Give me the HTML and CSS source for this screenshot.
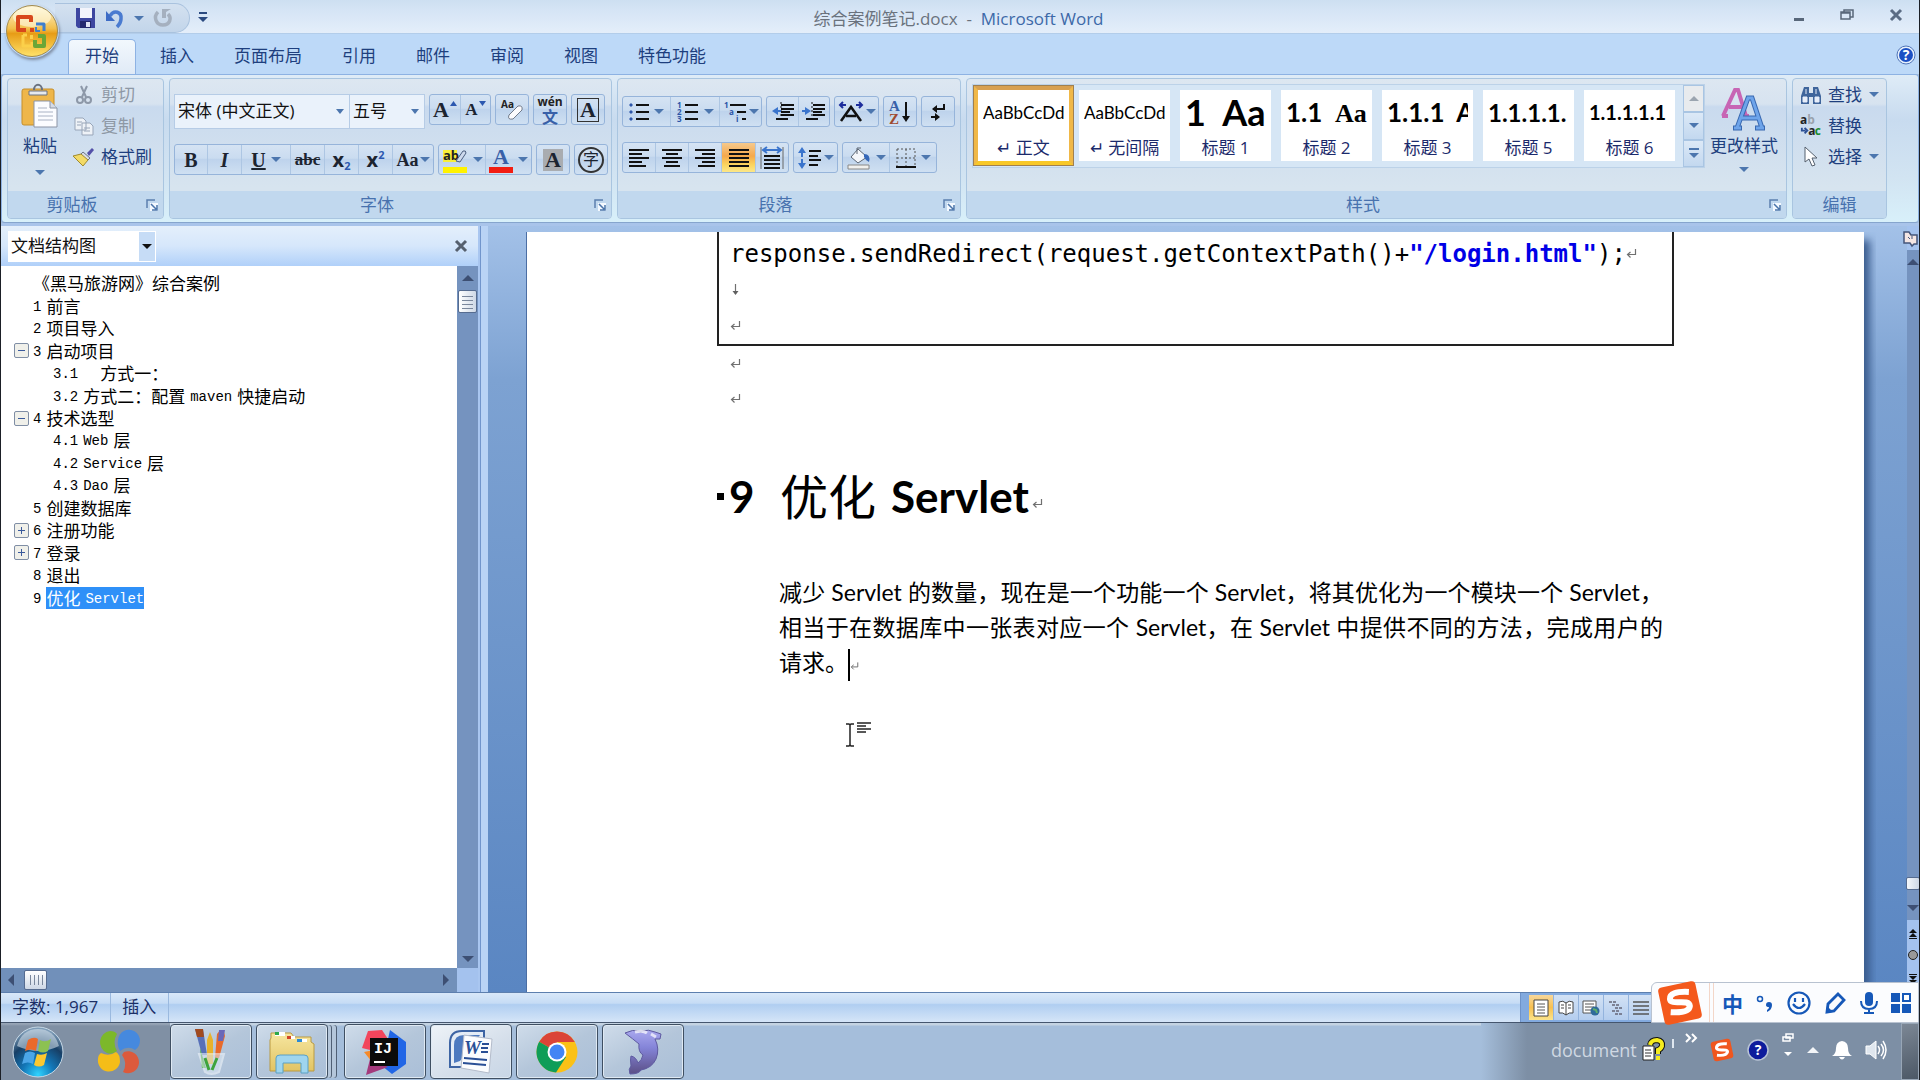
FILE: index.html
```html
<!DOCTYPE html>
<html lang="zh-CN">
<head>
<meta charset="utf-8">
<title>综合案例笔记.docx - Microsoft Word</title>
<link rel="stylesheet" href="styles.css">
</head>
<body>
<svg class="defs" aria-hidden="true">
  <defs>
    <symbol id="ret" viewBox="0 0 11 10"><path d="M9.500 0v5.500H2M4.500 3L1.500 5.500l3 3" fill="none" stroke="#707070" stroke-width="1.200"/></symbol>
    <symbol id="launch" viewBox="0 0 12 12"><path d="M1 9V1h8" fill="none" stroke="#5b7fae" stroke-width="1.500"/><path d="M4 4h8v8H4z" fill="#f4f9ff"/><path d="M5 5l5 5M11 6v5H6" fill="none" stroke="#4a74aa" stroke-width="1.500"/></symbol>
    <linearGradient id="gOrb" x1="0" y1="0" x2="0" y2="1"><stop offset="0" stop-color="#fff6d4"/><stop offset=".45" stop-color="#f3c04d"/><stop offset=".55" stop-color="#e79c16"/><stop offset="1" stop-color="#ffe36a"/></linearGradient>
    <radialGradient id="gWin" cx=".5" cy=".95" r=".9"><stop offset="0" stop-color="#2fd3ff"/><stop offset=".35" stop-color="#1377b8"/><stop offset=".7" stop-color="#173f66"/><stop offset="1" stop-color="#7f9db8"/></radialGradient>
    <linearGradient id="gDolphin" x1="0" y1="0" x2="0" y2="1"><stop offset="0" stop-color="#a9a8ee"/><stop offset=".4" stop-color="#8484d8"/><stop offset="1" stop-color="#5b4f86"/></linearGradient>
    <linearGradient id="gFolder" x1="0" y1="0" x2="0" y2="1"><stop offset="0" stop-color="#f6e6a0"/><stop offset="1" stop-color="#e2c463"/></linearGradient>
  </defs>
</svg>

<header class="titlebar">
  <div class="qat">
    <button class="plain" aria-label="保存"><svg width="22" height="22" viewBox="0 0 22 22"><path d="M2 1h19v20H4l-2-2z" fill="#3d46a0"/><path d="M6 1h12v10H6z" fill="#f2f4fb"/><path d="M6 14h11v7H6z" fill="#22286e"/><path d="M12 15h4v5h-4z" fill="#dfe3f4"/></svg></button>
    <button class="plain" aria-label="撤消"><svg width="20" height="20" viewBox="0 0 20 20"><path d="M5 8C9 1 17 4 16 11c0 3-2 6-4 8" fill="none" stroke="#4a7bd0" stroke-width="3.500"/><path d="M1 3v10h9z" fill="#3d6cc6"/></svg></button>
    <i class="caret"></i>
    <button class="plain redo" aria-label="恢复"><svg width="20" height="20" viewBox="0 0 20 20"><path d="M5 4c-5 5-2 13 5 13s9-7 5-11" fill="none" stroke="#a5b0bf" stroke-width="3.500"/><path d="M9 1h9l-5 3v6h-4z" fill="#a5b0bf"/></svg></button>
  </div>
  <button class="plain more" aria-label="自定义快速访问工具栏"><svg width="10" height="12" viewBox="0 0 10 12"><path d="M1 1h8v2H1zM0 6h10l-5 5z" fill="#2b4a80"/></svg></button>
  <h1 class="title">综合案例笔记.docx&nbsp; -&nbsp; <span>Microsoft Word</span></h1>
  <div class="wincontrols">
    <button class="plain" aria-label="最小化"><svg width="12" height="14" viewBox="0 0 12 14"><path d="M1 10h10v3H1z" fill="#58677a"/></svg></button>
    <button class="plain" aria-label="还原"><svg width="14" height="14" viewBox="0 0 14 14"><path d="M4 4V2h9v7h-3M1 4h9v7H1zM1 5h9" fill="none" stroke="#58677a" stroke-width="1.500"/></svg></button>
    <button class="plain" aria-label="关闭"><svg width="14" height="14" viewBox="0 0 14 14"><path d="M2 2l10 10M12 2L2 12" stroke="#5b6c84" stroke-width="3"/></svg></button>
  </div>
</header>

<nav class="tabs">
  <button class="tab active">开始</button><button class="tab">插入</button><button class="tab">页面布局</button><button class="tab">引用</button><button class="tab">邮件</button><button class="tab">审阅</button><button class="tab">视图</button><button class="tab">特色功能</button>
  <button class="plain help" aria-label="帮助"><svg width="20" height="20" viewBox="0 0 20 20"><circle cx="10" cy="10" r="9" fill="#e8f1fc" stroke="#4f74b8"/><circle cx="10" cy="10" r="7" fill="#1c50c4"/><text x="10" y="15" text-anchor="middle" class="qmark">?</text></svg></button>
</nav>
<button class="plain office" aria-label="Office 按钮"><svg width="54" height="54" viewBox="0 0 54 54"><circle cx="27" cy="27" r="25.500" fill="url(#gOrb)" stroke="#a08a50"/><ellipse cx="27" cy="13" rx="19" ry="10" fill="#fffbe6" opacity=".6"/><g fill="none" stroke-linejoin="round"><path d="M21 26h-8V13h13v5" stroke="#d8481c" stroke-width="4"/><path d="M31 20h8v7" stroke="#3f7fce" stroke-width="3"/><path d="M31 23v4h4" stroke="#3f7fce" stroke-width="2"/><path d="M18 31v11h9v-4M18 31h4" stroke="#fbd04a" stroke-width="3"/><path d="M33 32h6v10h-9v-6" stroke="#6aa637" stroke-width="4"/></g><path d="M25 24h4v4h-4z" fill="#d8481c"/><path d="M25 31h3v4h-3z" fill="#fbd04a"/></svg></button>

<section class="ribbon">
  <div class="group clip">
    <div class="gbody">
      <button class="plain big"><svg width="38" height="44" viewBox="0 0 38 44"><rect x="1" y="5" width="32" height="36" rx="2" fill="#eeb64a" stroke="#c58e2b"/><path d="M8 7h18v4H8z" fill="#e6e9ee" stroke="#6a7280"/><path d="M13 6c0-7 8-7 8 0" fill="none" stroke="#6a7280" stroke-width="2"/><path d="M13 17h16l7 7v19H13z" fill="#fbfcff" stroke="#8b94a5"/><path d="M29 17v7h7" fill="#d5dbe6" stroke="#8b94a5"/><path d="M17 24h9M17 28h15M17 32h15M17 36h15" stroke="#a9b2c4"/></svg><span>粘贴</span><i class="caret"></i></button>
      <div class="stack">
        <button class="plain item off"><svg width="20" height="20" viewBox="0 0 20 20"><path d="M7 1l5 11M13 1L8 12" stroke="#8d98a8" stroke-width="2"/><circle cx="6" cy="15" r="3" fill="none" stroke="#8d98a8" stroke-width="2"/><circle cx="14" cy="15" r="3" fill="none" stroke="#8d98a8" stroke-width="2"/></svg>剪切</button>
        <button class="plain item off"><svg width="20" height="20" viewBox="0 0 20 20"><g fill="#eef2f7" stroke="#98a5b8"><path d="M1 2h8l3 3v9H1zM8 7h8l3 3v9H8z"/><path d="M3 6h5M3 9h4M10 12h6M10 15h6"/></g></svg>复制</button>
        <button class="plain item"><svg width="22" height="20" viewBox="0 0 22 20"><path d="M14 6l5-5 2 2-5 6z" fill="#5350a8"/><path d="M10 5l7 6-3 3-7-6z" fill="#d8dce6" stroke="#6c7486"/><path d="M8 7l7 6-5 6L0 9z" fill="#f3da66" stroke="#a08a2e"/></svg>格式刷</button>
      </div>
    </div>
    <div class="gfoot"><span>剪贴板</span><svg width="12" height="12"><use href="#launch"/></svg></div>
  </div>

  <div class="group font">
    <div class="gbody rows">
      <div class="row">
        <label class="combo face"><select aria-label="字体"><option>宋体 (中文正文)</option></select></label>
        <label class="combo size"><select aria-label="字号"><option>五号</option></select></label>
        <div class="btns"><button class="w30 serif f22">A<svg width="7" height="5"><path d="M0 5h7L3.500 0z" fill="#2c58b0"/></svg></button><button class="w30 serif f17">A<svg width="7" height="5"><path d="M0 0h7L3.500 5z" fill="#2c58b0"/></svg></button></div>
        <div class="btns"><button class="w32" aria-label="清除格式"><svg width="26" height="26" viewBox="0 0 26 26"><text x="2" y="11" class="t10">Aa</text><path d="M10 18l9-9q5-1 4 4l-9 9q-6 1-4-4z" fill="#fbfbfd" stroke="#707a8a"/></svg></button></div>
        <div class="btns"><button class="w32 pinyin"><span class="wen">wén</span><span>文</span></button></div>
        <div class="btns"><button class="w32 serif"><span class="framed">A</span></button></div>
      </div>
      <div class="row">
        <div class="btns"><button class="w32 serif f20"><b>B</b></button><button class="w34 serif f20"><i>I</i></button><button class="w49 serif f20"><u>U</u><i class="caret"></i></button><button class="w34 serif f17"><s>abc</s></button><button class="w34 sans f20"><b>x</b><sub>2</sub></button><button class="w34 sans f20"><b>x</b><sup>2</sup></button><button class="w41 serif f18">Aa<i class="caret"></i></button></div>
        <div class="btns"><button class="w46" aria-label="突出显示"><svg width="26" height="26" viewBox="0 0 26 26"><path d="M1 3h14v12H1z" fill="#f8ef3a"/><text x="1" y="13" class="t13">ab</text><path d="M14 14l7-10q3-1 3 2l-6 9z" fill="#cdd9ec" stroke="#4c6080"/><path d="M1 20h24v6H1z" fill="#fff200"/></svg><i class="caret"></i></button><button class="w46" aria-label="字体颜色"><svg width="24" height="26" viewBox="0 0 24 26"><text x="12" y="17" text-anchor="middle" class="t21 blue">A</text><path d="M0 20h24v6H0z" fill="#f21d12"/></svg><i class="caret"></i></button></div>
        <div class="btns"><button class="w32 serif"><span class="shaded">A</span></button></div>
        <div class="btns"><button class="w32"><span class="ringed">字</span></button></div>
      </div>
    </div>
    <div class="gfoot"><span>字体</span><svg width="12" height="12"><use href="#launch"/></svg></div>
  </div>

  <div class="group para">
    <div class="gbody rows">
      <div class="row">
        <div class="btns"><button class="w47" aria-label="项目符号"><svg width="20" height="20" viewBox="0 0 20 20"><path d="M7 3h13M7 10h13M7 17h13" stroke="#111" stroke-width="2"/><path d="M2 1l2 2-2 2-2-2zM2 8l2 2-2 2-2-2zM2 15l2 2-2 2-2-2z" fill="#2c55a8"/></svg><i class="caret"></i></button><button class="w49" aria-label="编号"><svg width="22" height="22" viewBox="0 0 22 22"><path d="M8 4h13M8 11h13M8 18h13" stroke="#111" stroke-width="2"/><g class="t8"><text x="0" y="7">1</text><text x="0" y="14">2</text><text x="0" y="21">3</text></g></svg><i class="caret"></i></button><button class="w42" aria-label="多级列表"><svg width="24" height="22" viewBox="0 0 24 22"><path d="M7 4h16M14 11h9M19 18h4" stroke="#111" stroke-width="2"/><g class="t8"><text x="1" y="7">1</text><text x="6" y="14">a</text><text x="13" y="21">i</text></g></svg><i class="caret"></i></button></div>
        <div class="btns"><button class="w31" aria-label="减少缩进量"><svg width="24" height="22" viewBox="0 0 24 22"><path d="M10 4h13M10 8h13M10 11h9M10 14h13M5 18h12" stroke="#111" stroke-width="2"/><path d="M10 1v20" stroke="#111" stroke-dasharray="2 2"/><path d="M1 10l6-4v8z" fill="#3a74cc"/><path d="M5 10h5" stroke="#3a74cc" stroke-width="2"/></svg></button><button class="w31" aria-label="增加缩进量"><svg width="24" height="22" viewBox="0 0 24 22"><path d="M11 4h12M11 8h12M11 11h9M11 14h12M4 18h12" stroke="#111" stroke-width="2"/><path d="M10 1v20" stroke="#111" stroke-dasharray="2 2"/><path d="M9 10L3 6v8z" fill="#3a74cc"/><path d="M0 10h5" stroke="#3a74cc" stroke-width="2"/></svg></button></div>
        <div class="btns"><button class="w43" aria-label="中文版式"><svg width="26" height="22" viewBox="0 0 26 22"><path d="M3 20L13 6l10 14M8 15h10" fill="none" stroke="#111" stroke-width="2.500"/><path d="M2 4h6M18 4h6M5 1L2 4l3 3M21 1l3 3-3 3" fill="none" stroke="#1d2d9c" stroke-width="2"/></svg><i class="caret"></i></button></div>
        <div class="btns"><button class="w32" aria-label="排序"><svg width="24" height="26" viewBox="0 0 24 26"><text x="1" y="12" class="t14 blue">A</text><text x="1" y="25" class="t14 brown">Z</text><path d="M18 3v16" stroke="#111" stroke-width="2"/><path d="M14 17h8l-4 6z" fill="#111"/></svg></button></div>
        <div class="btns"><button class="w32" aria-label="显示编辑标记"><svg width="20" height="22" viewBox="0 0 20 22"><path d="M16 3v5H8M3 16h7" fill="none" stroke="#111" stroke-width="2"/><path d="M9 4v8L4 8zM7 12v8l5-4z" fill="#111"/></svg></button></div>
      </div>
      <div class="row">
        <div class="btns"><button class="w32" aria-label="左对齐"><svg width="20" height="20" viewBox="0 0 20 20"><path d="M0 2h20M0 6h13M0 10h20M0 14h13M0 18h17" stroke="#111" stroke-width="2"/></svg></button><button class="w33" aria-label="居中"><svg width="20" height="20" viewBox="0 0 20 20"><path d="M0 2h20M4 6h12M0 10h20M4 14h12M2 18h16" stroke="#111" stroke-width="2"/></svg></button><button class="w33" aria-label="右对齐"><svg width="20" height="20" viewBox="0 0 20 20"><path d="M0 2h20M7 6h13M0 10h20M7 14h13M3 18h17" stroke="#111" stroke-width="2"/></svg></button><button class="w34 on" aria-label="两端对齐"><svg width="20" height="20" viewBox="0 0 20 20"><path d="M0 2h20M0 6h20M0 10h20M0 14h20M0 18h20" stroke="#111" stroke-width="2"/></svg></button><button class="w33" aria-label="分散对齐"><svg width="24" height="24" viewBox="0 0 24 24"><path d="M1 1v22M23 1v22" stroke="#666"/><path d="M4 10h16M4 14h16M4 18h16M4 22h16" stroke="#111" stroke-width="2"/><path d="M4 4h16M7 1L3 4l4 3M17 1l4 3-4 3" fill="none" stroke="#3a74cc" stroke-width="2"/></svg></button></div>
        <div class="btns"><button class="w43" aria-label="行距"><svg width="24" height="22" viewBox="0 0 24 22"><path d="M11 4h12M11 9h9M11 13h12M11 18h9" stroke="#111" stroke-width="2"/><path d="M4 2v18" stroke="#3a74cc" stroke-width="2" stroke-dasharray="8 2"/><path d="M0 6l4-6 4 6zM0 16h8l-4 6z" fill="#3a74cc"/></svg><i class="caret"></i></button></div>
        <div class="btns"><button class="w46" aria-label="底纹"><svg width="24" height="24" viewBox="0 0 24 24"><path d="M11 3l9 8-9 6-7-6z" fill="#f4f6fa" stroke="#5a6472"/><path d="M10 8V2h4" fill="none" stroke="#5a6472"/><path d="M17 8q7 0 5 8-3-1-5-5z" fill="#3567b8"/><path d="M1 19h21v4H1z" fill="#f0f0ee" stroke="#888"/></svg><i class="caret"></i></button><button class="w47" aria-label="边框"><svg width="20" height="20" viewBox="0 0 20 20"><path d="M1 1h18v18M1 1v18M10 1v18M1 10h18" fill="none" stroke="#555" stroke-dasharray="2 2"/><path d="M0 19h20" stroke="#111" stroke-width="2"/></svg><i class="caret"></i></button></div>
      </div>
    </div>
    <div class="gfoot"><span>段落</span><svg width="12" height="12"><use href="#launch"/></svg></div>
  </div>

  <div class="group styles">
    <div class="gbody">
      <div class="gallery">
        <button class="card sel"><span class="sample s17">AaBbCcDd</span><span class="name">↵ 正文</span></button>
        <button class="card"><span class="sample s17">AaBbCcDd</span><span class="name">↵ 无间隔</span></button>
        <button class="card"><span class="sample s36">1&nbsp; Aa</span><span class="name">标题 1</span></button>
        <button class="card"><span class="sample s26">1.1&nbsp; <span class="cambria">Aa</span></span><span class="name">标题 2</span></button>
        <button class="card"><span class="sample s26">1.1.1&nbsp; Aa</span><span class="name">标题 3</span></button>
        <button class="card"><span class="sample s24">1.1.1.1.</span><span class="name">标题 5</span></button>
        <button class="card"><span class="sample s20">1.1.1.1.1</span><span class="name">标题 6</span></button>
        <div class="pager"><button aria-label="上一行" class="dim"><i class="caret up"></i></button><button aria-label="下一行"><i class="caret"></i></button><button aria-label="更多"><i class="bar"></i><i class="caret"></i></button></div>
      </div>
      <button class="plain big change"><svg width="44" height="44" viewBox="0 0 44 44"><path d="M1 29L13 3h3l8 26M7 20h13M0 29h6M19 29h8" fill="none" stroke="#c765b4" stroke-width="4"/><path d="M15 41L26 11h4l10 30M20 31h16M11 41h9M33 41h10" fill="none" stroke="#3868b0" stroke-width="5"/><path d="M15 41L26 11h4l10 30M20 31h16M12 41h7M34 41h8" fill="none" stroke="#6ea4ea" stroke-width="3"/></svg><span>更改样式</span><i class="caret"></i></button>
    </div>
    <div class="gfoot"><span>样式</span><svg width="12" height="12"><use href="#launch"/></svg></div>
  </div>

  <div class="group edit">
    <div class="gbody">
      <div class="stack">
        <button class="plain item"><svg width="22" height="20" viewBox="0 0 22 20"><path d="M4 2h5v6h4V2h5l3 9v8h-8v-7H9v7H1v-8z" fill="#3f659c"/><path d="M3 12h4v5H3zM15 12h4v5h-4zM6 4v5M16 4v5" fill="#e7eefa" stroke="#e7eefa"/></svg>查找<i class="caret"></i></button>
        <button class="plain item"><svg width="24" height="22" viewBox="0 0 24 22"><text x="0" y="9" class="t13">a</text><text x="8" y="9" class="t13 grey">b</text><text x="9" y="21" class="t13">a</text><text x="16" y="21" class="t13 green">c</text><path d="M2 13v3h4M5 13l3 3-3 3" fill="none" stroke="#2c4f94" stroke-width="2"/></svg>替换</button>
        <button class="plain item"><svg width="22" height="20" viewBox="0 0 22 20"><path d="M5 0v15l4-3 3 7 3-1-3-7h5z" fill="#fff" stroke="#55606e"/></svg>选择<i class="caret"></i></button>
      </div>
    </div>
    <div class="gfoot"><span>编辑</span></div>
  </div>
</section>

<main class="work">
  <aside class="outline">
    <div class="ohead">
      <label class="combo pane"><select aria-label="窗格"><option>文档结构图</option></select></label>
      <button class="plain" aria-label="关闭窗格"><svg width="14" height="14" viewBox="0 0 14 14"><path d="M2 2l10 10M12 2L2 12" stroke="#56606e" stroke-width="3"/></svg></button>
    </div>
    <div class="obody">
      <ul class="tree">
        <li><a href="#top">《黑马旅游网》综合案例</a></li>
        <li><a href="#s1"><b>1</b>前言</a></li>
        <li><a href="#s2"><b>2</b>项目导入</a></li>
        <li class="minus"><a href="#s3"><b>3</b>启动项目</a></li>
        <li class="sub"><a href="#s31"><b>3.1</b>&emsp;方式一：</a></li>
        <li class="sub"><a href="#s32"><b>3.2</b>方式二：配置<b>maven</b>快捷启动</a></li>
        <li class="minus"><a href="#s4"><b>4</b>技术选型</a></li>
        <li class="sub"><a href="#s41"><b>4.1</b><b>Web</b>层</a></li>
        <li class="sub"><a href="#s42"><b>4.2</b><b>Service</b>层</a></li>
        <li class="sub"><a href="#s43"><b>4.3</b><b>Dao</b>层</a></li>
        <li><a href="#s5"><b>5</b>创建数据库</a></li>
        <li class="minus plus"><a href="#s6"><b>6</b>注册功能</a></li>
        <li class="minus plus"><a href="#s7"><b>7</b>登录</a></li>
        <li><a href="#s8"><b>8</b>退出</a></li>
        <li><a href="#s9"><b>9</b><mark>优化<b>Servlet</b></mark></a></li>
      </ul>
      <div class="vbar"><i class="tri up"></i><span class="thumb"></span><i class="tri down"></i></div>
    </div>
    <div class="hbar"><i class="tri left"></i><span class="thumb"></span><i class="tri right"></i></div>
  </aside>
  <div class="splitter"></div>
  <div class="canvas">
    <article class="page">
      <div class="codebox">
        <p class="code">response.sendRedirect(request.getContextPath()+<b>"/login.html"</b>);<svg width="11" height="10"><use href="#ret"/></svg></p>
        <p><svg width="11" height="12" viewBox="0 0 11 12"><path d="M5.500 0v10" stroke="#707070" stroke-width="1.200"/><path d="M2.500 7h6l-3 4z" fill="#606060"/></svg></p>
        <p><svg width="11" height="10"><use href="#ret"/></svg></p>
      </div>
      <p class="blank"><svg width="11" height="10"><use href="#ret"/></svg></p>
      <p class="blank"><svg width="11" height="10"><use href="#ret"/></svg></p>
      <h2 id="s9"><i></i><span class="num">9</span><span class="han">优化</span><span class="lat">Servlet</span><svg width="11" height="10"><use href="#ret"/></svg></h2>
      <p class="text">减少 Servlet 的数量，现在是一个功能一个 Servlet，将其优化为一个模块一个 Servlet，相当于在数据库中一张表对应一个 Servlet，在 Servlet 中提供不同的方法，完成用户的请求。<span class="cursor"></span><svg width="9" height="9"><use href="#ret"/></svg></p>
      <svg class="ibeam" width="26" height="26" viewBox="0 0 26 26"><path d="M1 2h3l1 1 1-1h3M5 3v20M1 24h3l1-1 1 1h3" fill="none" stroke="#222" stroke-width="1.500"/><path d="M12 1h14M12 4h9M12 7h14M12 10h9" stroke="#222" stroke-width="1.500"/></svg>
    </article>
  </div>
  <div class="vscroll">
    <svg width="17" height="17" viewBox="0 0 17 17"><path d="M2 2h5l2 3h6v9h-3l-2 2-2-3H2z" fill="#f4e6e4" stroke="#44557a" stroke-width="1.500"/><path d="M6 7l2 2M10 6v3" stroke="#44557a"/></svg>
    <div class="track"><i class="tri up"></i><span class="thumb"></span><i class="tri down"></i></div>
    <div class="browse"><svg width="10" height="60" viewBox="0 0 10 60"><path d="M1 5l4-4 4 4zM1 9l4-4 4 4zM1 10h8v1H1z" fill="#111"/><path d="M1 46h8v1H1zM1 48h8l-4 4zM1 52h8l-4 4z" fill="#111"/><circle cx="5" cy="27" r="4.500" fill="#999" stroke="#222"/></svg></div>
  </div>
</main>

<footer class="status">
  <span class="cell">字数: 1,967</span><span class="cell">插入</span>
  <div class="views">
    <button class="on" aria-label="页面视图"><svg width="16" height="18" viewBox="0 0 16 18"><path d="M1 1h14v16H1z" fill="#fff" stroke="#444"/><path d="M4 5h8M4 8h8M4 11h8M4 14h8" stroke="#555"/></svg></button>
    <button aria-label="阅读版式"><svg width="16" height="16" viewBox="0 0 16 16"><path d="M8 3Q5 0 1 2v11q4-1 7 2 3-3 7-2V2q-4-2-7 1zM8 3v12M3 5h3M3 8h3M10 5h3M10 8h3" fill="#fff" stroke="#444"/></svg></button>
    <button aria-label="Web 版式"><svg width="18" height="16" viewBox="0 0 18 16"><path d="M1 1h13v12H1z" fill="#fff" stroke="#555"/><path d="M3 4h9M3 7h9M3 10h6" stroke="#555"/><circle cx="13" cy="11" r="4.500" fill="#2f6a9a"/><path d="M11 9l3 1 1 3" stroke="#5dae6b" stroke-width="2" fill="none"/></svg></button>
    <button aria-label="大纲"><svg width="16" height="16" viewBox="0 0 16 16"><path d="M1 2h8M4 5h8M7 8h8M4 11h8M7 14h8" stroke="#667" stroke-width="1.500" stroke-dasharray="3 1"/></svg></button>
    <button aria-label="普通视图"><svg width="16" height="16" viewBox="0 0 16 16"><path d="M0 2h16M0 6h16M0 10h16M0 14h16" stroke="#555" stroke-width="1.500"/></svg></button>
  </div>
</footer>

<div class="ime">
  <svg width="44" height="42" viewBox="0 0 44 42"><g transform="rotate(-12 22 21)"><rect x="3" y="2" width="38" height="38" rx="4" fill="#f4591c"/><path d="M33 12Q14 7 13 15C12 22 32 18 31 26Q29 33 11 28" fill="none" stroke="#fff" stroke-width="6"/></g></svg>
  <i class="sep"></i>
  <div class="imekeys">
    <button class="plain cn">中</button>
    <button class="plain" aria-label="标点"><svg width="18" height="22" viewBox="0 0 18 22"><circle cx="4" cy="7" r="2.500" fill="none" stroke="#1658b8" stroke-width="1.500"/><path d="M10 13a3 3 0 1 1 6 0q0 5-5 7v-2q2-1 2-3-3 0-3-2z" fill="#1658b8"/></svg></button>
    <button class="plain" aria-label="表情"><svg width="24" height="24" viewBox="0 0 24 24"><circle cx="12" cy="12" r="10.500" fill="none" stroke="#1658b8" stroke-width="2.200"/><path d="M8 7v4M16 7v4M6 13q6 8 12 0" fill="none" stroke="#1658b8" stroke-width="2.200"/></svg></button>
    <button class="plain" aria-label="手写"><svg width="22" height="22" viewBox="0 0 22 22"><path d="M2 20l1-8L13 2l6 6L9 19z" fill="none" stroke="#1658b8" stroke-width="2.800"/><path d="M1 21l7-1-6-6z" fill="#1658b8"/></svg></button>
    <button class="plain" aria-label="语音"><svg width="18" height="24" viewBox="0 0 18 24"><rect x="5" y="1" width="8" height="14" rx="4" fill="#1658b8"/><path d="M1 10q0 8 8 8t8-8M9 18v4M4 22h10" fill="none" stroke="#1658b8" stroke-width="2"/></svg></button>
    <button class="plain" aria-label="工具箱"><svg width="20" height="20" viewBox="0 0 20 20"><path d="M0 0h9v9H0zM0 11h9v9H0zM11 11h9v9h-9z" fill="#1658b8"/><path d="M12 1h7v7h-7z" fill="#fff" stroke="#1658b8" stroke-width="2"/></svg></button>
  </div>
</div>

<nav class="taskbar">
  <div class="start">
    <button class="plain" aria-label="开始菜单"><svg width="52" height="52" viewBox="0 0 52 52"><circle cx="26" cy="26" r="25" fill="url(#gWin)" stroke="#c6d8e6"/><path d="M5 20Q10 3 26 3t21 17q-20 10-42 0z" fill="#dce8f0" opacity=".55"/><path d="M16 14q6-4 10-1l-2 12q-5-3-11 0z" fill="#ea6a2c"/><path d="M28 14q5 3 11-1l-3 12q-5 3-10 0z" fill="#8cc152"/><path d="M13 27q5-3 10 0l-2 11q-5-3-11 0z" fill="#4ba6e8"/><path d="M25 28q5 2 10-1l-3 12q-5 3-10 0z" fill="#fcc82f"/></svg></button>
    <button class="plain" aria-label="四叶草"><svg width="44" height="44" viewBox="0 0 44 44"><path d="M13 1q5 0 7 3-5 8 0 17-5 4-10 2A11.500 11.500 0 0 1 13 1z" fill="#7cb82a"/><path d="M21 10a11 11 0 1 1 17 10q-7-5-15 1-3-5-2-11z" fill="#4689de"/><path d="M1 29q0-4 3-6 8 4 15-1 4 2 4 10A11 11 0 1 1 1 29z" fill="#f5bd18"/><path d="M27 22a11 11 0 1 1-1 20q5-9-1-17z" fill="#dc5a3c"/></svg></button>
  </div>
  <div class="tasks">
    <button class="task" aria-label="画图"><svg width="36" height="48" viewBox="0 0 36 48"><path d="M2 1h8l4 26H9z" fill="#5870b8"/><path d="M2 1h8l1 8H4z" fill="#a04a20"/><path d="M14 12l3-8 3 8v24h-6z" fill="#e8b22c"/><path d="M24 6q2-4 7-2l1 4-6 22h-4z" fill="#e86a2a"/><path d="M26 2h6l-2 11h-5z" fill="#6a68b8"/><path d="M7 20l6 20h-4z" fill="#3fa43c"/><path d="M6 26h25l-5 18q-8 4-14 0z" fill="#dfeaf5" opacity=".55" stroke="#f5f9fd" stroke-width="2"/><path d="M12 30l4 12M24 30l-5 12" stroke="#3fa43c" stroke-width="3"/></svg></button>
    <button class="task pile" aria-label="资源管理器"><svg width="46" height="44" viewBox="0 0 46 44"><path d="M2 8V3h20l3 4h17v5l3 2v27H1V10z" fill="url(#gFolder)" stroke="#b99a42"/><path d="M6 2h10v4H6zM18 6h8v3h-8zM28 9h10v3H28z" fill="#fff"/><path d="M6 2h4v3H6z" fill="#2da84a"/><path d="M18 6h4v3h-4z" fill="#d2452a"/><path d="M28 9h5v3h-5z" fill="#2b8ad6"/><path d="M7 43V28q0-3 4-3h24q4 0 4 3v15h-7V33H14v10z" fill="#9fd5ee" stroke="#5aa0c4"/></svg></button>
    <button class="task" aria-label="IntelliJ IDEA"><svg width="46" height="46" viewBox="0 0 46 46"><path d="M6 2l14-1 8 12-20 8-8-2z" fill="#f2455c"/><path d="M2 23l10-2-2 12z" fill="#f58a2a"/><path d="M28 1l16 12v22L30 45l-10-8z" fill="#2166e6"/><path d="M8 30l18 8-22 8z" fill="#a43a7c"/><path d="M8 9h28v28H8z" fill="#0b0b0b"/><path d="M12 32h11v2H12z" fill="#fff"/><text x="12" y="24" class="ij">IJ</text></svg></button>
    <button class="task lit" aria-label="Word"><svg width="46" height="46" viewBox="0 0 46 46"><path d="M2 38V14Q2 2 14 2h22v36z" fill="#e4ecf6" stroke="#3d64a4" stroke-width="2"/><path d="M6 34V16Q6 6 16 6h16L12 32z" fill="#4d7ac0"/><path d="M16 6l28 4-3 34-28-5z" fill="#fbfcfe" stroke="#b4bccb"/><text x="16" y="25" class="word">W</text><path d="M34 15h7M33 19h7M33 23h7M16 29l23 2M15 34l23 2" stroke="#294f96" stroke-width="2"/></svg></button>
    <button class="task" aria-label="Chrome"><svg width="42" height="42" viewBox="0 0 42 42"><circle cx="21" cy="21" r="20.500" fill="#fbc116"/><path d="M21 21L3.200 10.800A20.500 20.500 0 0 1 38.800 11H21z" fill="#db4437"/><path d="M21 21L3.200 10.800A20.500 20.500 0 0 0 20 41.500L30 26z" fill="#0f9d58"/><circle cx="21" cy="21" r="9.500" fill="#fff"/><circle cx="21" cy="21" r="7.500" fill="#4285f4"/></svg></button>
    <button class="task" aria-label="Navicat"><svg width="40" height="46" viewBox="0 0 40 46"><path d="M2 4q7-4 16-2 8-2 14 1l6 2-1 5-5 0q5 10 1 20-4 9-15 11-2 4-11 4-2-5 1-8-1-7 0-10 5 1 7 7 4-3 5-8-5-3-4-11Q10 10 2 4z" fill="url(#gDolphin)" stroke="#5e5aa0"/><path d="M12 3q8-2 12 1M28 5l5 3" stroke="#fff" stroke-width="3" opacity=".7"/></svg></button>
  </div>
  <div class="tray">
    <span class="lang">document</span>
    <svg width="22" height="24" viewBox="0 0 22 24"><path d="M1 8h11v14H1z" fill="#fff" stroke="#222"/><path d="M3 12h6M3 15h7M3 18h6" stroke="#333"/><path d="M8 7q1-5 7-5 6 1 5 6-1 3-4 4v4" fill="none" stroke="#111" stroke-width="6"/><path d="M8 7q1-5 7-5 6 1 5 6-1 3-4 4v4M14 20h4" fill="none" stroke="#f6ec20" stroke-width="4"/></svg>
    <svg class="lift" width="26" height="16" viewBox="0 0 26 16"><path d="M2 6v9" stroke="#dfe7ef" stroke-width="2"/><path d="M15 1l4 4-4 4M21 1l4 4-4 4" fill="none" stroke="#fff" stroke-width="2"/></svg>
    <svg width="24" height="22" viewBox="0 0 24 22"><g transform="rotate(-12 12 11)"><rect x="2" y="1" width="20" height="20" rx="3" fill="#f0561e"/><path d="M18 6Q8 3 7 8c0 4 11 2 10 6Q15 18 6 15" fill="none" stroke="#fff" stroke-width="3"/></g></svg>
    <svg width="22" height="22" viewBox="0 0 22 22"><circle cx="11" cy="11" r="10" fill="#0d1c9c" stroke="#b9c4d6" stroke-width="1.500"/><text x="11" y="16" text-anchor="middle" class="qmark">?</text></svg>
    <svg class="lift" width="12" height="24" viewBox="0 0 12 24"><path d="M4 1h7v4H4zM1 4h7v4H1z" fill="#7b8da3" stroke="#fff" stroke-width="1.500"/><path d="M2 19h8l-4 4z" fill="#fff"/></svg>
    <svg width="12" height="8" viewBox="0 0 12 8"><path d="M0 7l6-6 6 6z" fill="#f2f5f8"/></svg>
    <svg width="20" height="20" viewBox="0 0 20 20"><path d="M0 16q4-2 4-8 0-6 6-7 6 1 6 7 0 6 4 8zM7 17h6q-3 5-6 0z" fill="#fff"/></svg>
    <svg width="22" height="20" viewBox="0 0 22 20"><path d="M1 6h4l6-5v18l-6-5H1z" fill="#dfe6ee" stroke="#fff"/><path d="M13 6q3 4 0 8M16 4q5 6 0 12M18 1q6 9 0 18" fill="none" stroke="#fff" stroke-width="1.500"/></svg>
  </div>
  <button class="desk" aria-label="显示桌面"></button>
</nav>
</body>
</html>
```
FILE: styles.css
```css
* { box-sizing: border-box; }
body {
  margin: 0;
  min-height: 100vh;
  display: flex;
  flex-direction: column;
  position: relative;
  border-left: 1px solid #1b1f26;
  border-right: 1px solid #1b1f26;
  font: 17px/22px "Open Sans", "Noto Sans CJK SC", sans-serif;
  color: #1e3f7e;
  background: #a5bedb;
}
.defs { position: absolute; width: 0; height: 0; }
button { font: inherit; color: inherit; padding: 0; margin: 0; border: 0; background: none; }
svg { display: block; flex: none; overflow: visible; }
p, h1, h2, ul { margin: 0; padding: 0; }
.plain { display: flex; align-items: center; }
.caret { width: 0; height: 0; border: 5px solid transparent; border-top-color: #4c76ae; border-bottom: 0; flex: none; }
.caret.up { border: 5px solid transparent; border-bottom-color: #9ba5b0; border-top: 0; }

/* title bar */
.titlebar { height: 34px; display: flex; align-items: center; background: linear-gradient(#cddff1, #d5e4f5 30%, #e4eefa); border-bottom: 1px solid #b3cdea; padding-left: 54px; }
.qat { display: flex; align-items: center; gap: 9px; height: 30px; margin-top: 3px; width: 135px; padding-left: 19px; border: 1px solid #a9c2de; border-left: 0; border-radius: 0 15px 15px 0; background: linear-gradient(#d4e1f0, #c2d5ea); }
.more { margin-left: 8px; }
.title { flex: 1; padding: 4px 84px 0 0; text-align: center; font-size: 17px; font-weight: 400; color: #6a727d; }
.title span { color: #3d69a8; }
.wincontrols { display: flex; gap: 35px; padding: 0 16px 4px 0; }
.office { position: absolute; left: 4px; top: 4px; border-radius: 50%; box-shadow: 1px 2px 3px #7d8ba0; }

/* tabs */
.tabs { height: 40px; display: flex; align-items: stretch; padding: 5px 3px 0 63px; background: #bdd9f8; }
.tab { padding: 0 20px 2px; }
.tab.active { margin: 0 4px; padding: 0 16px 2px; border: 1px solid #8db2e3; border-bottom: 0; border-radius: 5px 5px 0 0; background: linear-gradient(#f2f8fd, #e0eaf6); }
.help { margin-left: auto; padding-bottom: 3px; }
.qmark { font: 700 14px "Open Sans", sans-serif; fill: #fff; }

/* ribbon */
.ribbon { height: 149px; display: flex; gap: 5px; padding: 3px 31px 3px 5px; background: linear-gradient(#dfecf7, #c8dbef 30%, #d2e4f2 70%, #d8f0fa); border: 1px solid #8db2e3; border-bottom: 1px solid #86a5cd; border-radius: 4px; }
.group { display: flex; flex-direction: column; border: 1px solid #a9c5e0; border-radius: 4px; background: linear-gradient(#dde7f1, #d7e3f0 18%, #c9daee 20%, #d7e4ef 78%); overflow: hidden; }
.clip { width: 157px; }
.font { width: 443px; }
.para { width: 344px; }
.styles { flex: 1; min-width: 0; }
.edit { width: 95px; }
.gbody { flex: 1; display: flex; }
.gfoot { height: 27px; display: flex; align-items: center; padding-right: 5px; background: #c1d8ee; color: #4872ae; }
.gfoot span { flex: 1; text-align: center; padding-right: 10px; }
.edit .gfoot, .edit .gfoot span { padding-right: 0; }
.big { flex-direction: column; justify-content: flex-start; gap: 7px; padding: 5px 0 0 8px; }
.big .caret { margin-top: 6px; }
.clip .big { width: 56px; }
.change { padding: 8px 0 0; margin-left: 5px; gap: 4px; }
.stack { display: flex; flex-direction: column; padding: 0 0 0 9px; }
.edit .stack { padding-left: 7px; }
.item { height: 31px; gap: 6px; }
.item svg { width: 22px; }
.item .caret { margin-left: 1px; }
.off { color: #8e98a5; }
.rows { flex-direction: column; gap: 15px; padding: 15px 4px 0; }
.para .rows { padding-top: 17px; }
.row { display: flex; gap: 4px; align-items: flex-start; height: 31px; }
.font .row:first-child { height: 35px; }
.btns { display: flex; height: 31px; border: 1px solid #96b4da; border-radius: 3px; background: linear-gradient(#d5e3f3, #cadcf0 45%, #bed3ec 50%, #cfe0f2); }
.btns button { display: flex; align-items: center; justify-content: center; gap: 5px; color: #1c2430; }
.btns button + button { border-left: 1px solid #adc6e3; }
.btns .on { background: linear-gradient(#f6c98c, #f5a94c 45%, #fbd45e 75%, #fce789); }
.w30 { width: 30px; } .w31 { width: 31px; } .w32 { width: 32px; } .w33 { width: 33px; } .w34 { width: 34px; }
.w41 { width: 41px; } .w42 { width: 42px; } .w43 { width: 43px; } .w46 { width: 46px; } .w47 { width: 47px; } .w49 { width: 49px; }
.serif { font-family: "Liberation Serif", serif; font-weight: 700; }
.sans { font-family: "Open Sans", sans-serif; }
.f17 { font-size: 17px; } .f18 { font-size: 18px; } .f20 { font-size: 20px; } .f22 { font-size: 22px; }
.w30 svg { align-self: flex-start; margin-top: 6px; }
.btns .w30, .btns .w41 { gap: 1px; }
.btns .sans { gap: 0; }
.btns .w42, .btns .w43 { gap: 2px; }
.btns .pinyin { flex-direction: column; gap: 0; font: 700 16px/16px "Noto Sans CJK SC", sans-serif; color: #3860a8; }
.btns .wen { font: 700 12px/12px "Open Sans", sans-serif; color: #222; }
sub, sup { font-size: 11px; line-height: 11px; font-weight: 700; color: #2c58b0; }
sub { padding-top: 12px; }
sup { padding-bottom: 10px; }
.framed { border: 1px solid #333; width: 22px; height: 24px; font-size: 22px; }
.shaded { background: #a9acb0; width: 20px; height: 22px; font-size: 22px; }
.ringed { border: 2px solid #333; border-radius: 50%; width: 26px; height: 26px; line-height: 21px; font-size: 16px; }
.t8, .t10, .t13 { font-family: "Open Sans", sans-serif; font-weight: 700; fill: #222; }
.t8 { font-size: 8px; fill: #2c55a8; } .t10 { font-size: 10px; } .t13 { font-size: 13px; }
.t14, .t21 { font-family: "Liberation Serif", serif; font-weight: 700; }
.t14 { font-size: 15px; } .t21 { font-size: 22px; }
.blue { fill: #3860a8; } .brown { fill: #a04a30; } .green { fill: #1b8c30; } .grey { fill: #9aa2ac; }

/* drop-down lists */
.combo { position: relative; display: block; }
.combo select { width: 100%; height: 100%; appearance: none; border: 1px solid #b6cce6; border-radius: 0; background: #eaf2fb; padding: 0 3px 2px; font: inherit; color: #111; }
.combo::after { content: ""; position: absolute; right: 6px; top: 15px; border: 4px solid transparent; border-top: 5px solid #4c76ae; border-bottom: 0; }
.face { width: 176px; height: 35px; }
.size { width: 76px; height: 35px; margin-left: -5px; }
.pane { width: 148px; height: 31px; }
.pane select { background: linear-gradient(90deg, #fff 130px, #c6dcf6 130px); border: 1px solid #fff; padding: 0 2px; }
.pane::after { top: 13px; right: 4px; border: 5px solid transparent; border-top-color: #111; border-bottom: 0; }

/* style gallery */
.gallery { display: flex; align-self: flex-start; margin: 5px 0 0 5px; height: 84px; border: 1px solid #bcd2e8; background: #d6e6f5; }
.card { width: 101px; height: 81px; border: 5px solid transparent; background: #fff; background-clip: padding-box; display: flex; flex-direction: column; overflow: hidden; }
.card.sel { border-color: #d8a050 #f0b848 #f8c828; outline: 1px solid #a08050; outline-offset: -1px; }
.sample { width: 81px; margin: 0 5px; height: 45px; line-height: 45px; overflow: hidden; white-space: nowrap; text-align: left; color: #000; font-family: Lato, sans-serif; font-weight: 700; }
.name { width: 100%; text-align: center; color: #1b2a6b; line-height: 26px; }
.s17 { font-size: 17px; font-weight: 400; } .s20 { font-size: 20px; } .s24 { font-size: 24px; } .s26 { font-size: 26px; } .s36 { font-size: 36px; }
.cambria { font-family: "Liberation Serif", serif; }
.pager { display: flex; flex-direction: column; width: 21px; margin-left: 3px; }
.pager button { flex: 1; display: flex; flex-direction: column; gap: 3px; align-items: center; justify-content: center; border: 1px solid #a9c5e3; background: linear-gradient(#dce9f7, #c3d8ef); }
.pager .dim { background: #e8ebee; }
.bar { width: 10px; height: 2px; background: #4c76ae; }

/* work area */
.work { flex: 1; display: flex; border-top: 3px solid #a9c4ea; }
.outline { width: 479px; display: flex; flex-direction: column; background: #fff; border-right: 2px solid #a9c6f0; }
.ohead { height: 40px; display: flex; align-items: center; justify-content: space-between; padding: 0 10px 0 7px; background: linear-gradient(#e4effb, #d6e7fb 50%, #b0d0f9); }
.obody { flex: 1; display: flex; justify-content: space-between; }
.tree { list-style: none; height: 337px; margin: 6px 0 0 32px; display: grid; grid-auto-rows: 1fr; font: 17px/22px "Noto Sans CJK SC", sans-serif; }
.tree li { display: flex; align-items: center; position: relative; }
.tree a { color: #000; text-decoration: none; display: flex; align-items: center; gap: 5px; white-space: pre; }
.tree b { font: 14px/20px "Liberation Mono", monospace; padding-top: 2px; }
.tree .sub { padding-left: 20px; }
.minus::before { content: ""; position: absolute; left: -19px; width: 13px; height: 13px; border: 1px solid #7f8ea5; border-radius: 2px; background: linear-gradient(#3a5a9c, #3a5a9c) center / 7px 1px no-repeat, #f0f0ea; }
.plus::before { background: linear-gradient(#3a5a9c, #3a5a9c) center / 7px 1px no-repeat, linear-gradient(#3a5a9c, #3a5a9c) center / 1px 7px no-repeat, #f0f0ea; }
.tree mark { background: #2f90f8; color: #fff; display: flex; gap: 5px; }
.vbar { width: 21px; display: flex; flex-direction: column; align-items: center; padding: 9px 0 6px; background: #7593bf; }
.tri { width: 0; height: 0; border: 6px solid transparent; flex: none; }
.tri.up { border-top: 0; border-bottom-color: #3d4f73; }
.tri.down { border-bottom: 0; border-top-color: #3d4f73; margin-top: auto; }
.tri.left { border-left: 0; border-right-color: #3d4f73; }
.tri.right { border-right: 0; border-left-color: #3d4f73; margin-left: auto; }
.thumb { border: 1px solid #566c90; border-radius: 2px; background: linear-gradient(90deg, #f4f7fb, #ced8e6); }
.vbar .thumb { width: 19px; height: 23px; margin-top: 9px; background: repeating-linear-gradient(#7a879c 0 1px, transparent 1px 4px) center 5px / 11px 13px no-repeat, linear-gradient(90deg, #fff, #ced8e6); }
.hbar { height: 24px; display: flex; align-items: center; padding: 0 8px 0 7px; margin-right: 21px; background: #7190ba; box-shadow: 21px 0 #a4c2ee; }
.hbar .thumb { width: 23px; height: 20px; margin-left: 10px; background: repeating-linear-gradient(90deg, #7a879c 0 1px, transparent 1px 4px) 5px center / 13px 10px no-repeat, linear-gradient(#fff, #ced8e6); }
.splitter { width: 8px; background: #b9d3f5; border-left: 1px solid #7195cc; }
.canvas { flex: 1; min-width: 0; display: flex; padding: 6px 43px 0 39px; background: linear-gradient(#a3c1e8, #7da2d2 20%, #5a86c2); }
.page { flex: 1; min-width: 0; padding: 0 190px; background: #fff; color: #000; box-shadow: 9px 5px 8px -3px #3a5c8e, -1px 0 #4b6ea4; clip-path: inset(0 -12px 0 -1px); }
.codebox { border: 2px solid #222; border-top: 0; padding: 4px 0 0 11px; }
.codebox p { height: 36px; display: flex; align-items: center; }
.codebox .code { font: 24px/36px "DejaVu Sans Mono", monospace; white-space: pre; }
.code b { color: #0000e6; }
.blank { height: 35px; padding-left: 13px; display: flex; align-items: center; }
.page h2 { display: flex; align-items: center; height: 60px; margin-top: 50px; font: 700 44px/60px Lato, sans-serif; }
.page h2 i { width: 7px; height: 7px; background: #000; margin-right: 5px; }
.num { width: 51px; }
.han { font: 400 48px/56px "Noto Sans CJK SC", sans-serif; height: 60px; margin-right: 15px; }
.page h2 svg { align-self: flex-end; margin: 0 0 17px 3px; }
.text { margin: 49px 11px 0 62px; font: 23px/35px Lato, "Noto Sans CJK SC", sans-serif; text-align: justify; }
.text svg { display: inline-block; }
.cursor { display: inline-block; width: 2px; height: 32px; background: #000; vertical-align: middle; }
.ibeam { margin: 41px 0 0 128px; }
.vscroll { width: 12px; display: flex; flex-direction: column; align-items: flex-end; background: #a4c2ee; padding-top: 4px; }
.track { width: 12px; flex: 1; display: flex; flex-direction: column; align-items: center; margin-top: 3px; padding: 9px 0; background: #7593bf; }
.track .thumb { width: 14px; height: 13px; margin-top: auto; }
.track .tri.down { margin-top: 15px; }
.browse { height: 72px; padding: 8px 1px 0; }

/* status bar */
.status { height: 31px; display: flex; border-top: 1px solid #5d7fae; border-bottom: 1px solid #45566e; background: linear-gradient(#d9e8f9, #c6dcf5 35%, #b0cef1 40%, #d5e5f8); color: #1b2f66; }
.cell { padding: 3px 12px 0 11px; border-right: 1px solid #9ab9df; }
.views { display: flex; margin-left: auto; width: 399px; padding: 2px 0 2px 8px; background: #83aade; border-left: 1px solid #6f93c8; }
.views button { width: 25px; display: grid; place-items: center; background: linear-gradient(#d3e2f5, #b4cdee); border-right: 1px solid #93b3dd; }
.views .on { background: linear-gradient(#f7d79c, #f8c050 50%, #fbe48c); }

/* input method bar */
.ime { position: absolute; right: 0; bottom: 57px; width: 268px; height: 41px; display: flex; align-items: center; padding: 0 7px 0 6px; background: #fbfcfe; border: 1px solid #b8c2d0; border-radius: 6px 0 0 0; }
.sep { width: 5px; height: 39px; border: 1px solid #f3d6c8; border-width: 0 1px; margin: 0 8px 0 7px; }
.imekeys { flex: 1; display: flex; align-items: center; justify-content: space-between; }
.cn { color: #1658b8; font: 700 21px/24px "Noto Sans CJK SC", sans-serif; }

/* taskbar */
.taskbar { height: 57px; display: flex; background: linear-gradient(#c4d3e2 2px, #a5bedb 3px); }
.start { width: 169px; display: flex; align-items: center; gap: 33px; padding-left: 11px; background: linear-gradient(#97a5b6 1px, #8090a4 3px); }
.tasks { display: flex; gap: 4px; flex: 1; }
.task { width: 82px; height: 55px; margin-top: 1px; display: grid; place-items: center; border: 1px solid #3f4f62; border-radius: 4px; background: linear-gradient(150deg, #cfdcea, #b4c6da 50%, #aabfd8); box-shadow: inset 0 0 0 1px #dfe9f3; }
.lit { background: linear-gradient(150deg, #eef3f8, #d4deea 60%, #c8d6e6); }
.pile { width: 72px; margin-right: 12px; box-shadow: inset 0 0 0 1px #dfe9f3, 4px 0 0 -1px #b4c6da, 5px 0 0 -1px #4f5f74, 9px 0 0 -1px #b4c6da, 10px 0 0 -1px #4f5f74; }
.ij { font: 700 15px "Liberation Mono", monospace; fill: #fff; }
.word { font: italic 700 19px "Liberation Serif", serif; fill: #294f96; }
.tray { display: flex; align-items: center; gap: 13px; width: 420px; padding: 0 13px 4px 70px; background: linear-gradient(90deg, #a5bedb, #7d8fa5 46px); }
.tray .lang { color: #cfd8e2; font-size: 18px; margin-right: -8px; }
.tray svg:nth-of-type(1) { margin-right: -6px; }
.lift { align-self: flex-start; margin-top: 10px; }
.desk { width: 18px; border: 1px solid #98a6b6; background: linear-gradient(160deg, #7c8795, #4c5866); }
```
